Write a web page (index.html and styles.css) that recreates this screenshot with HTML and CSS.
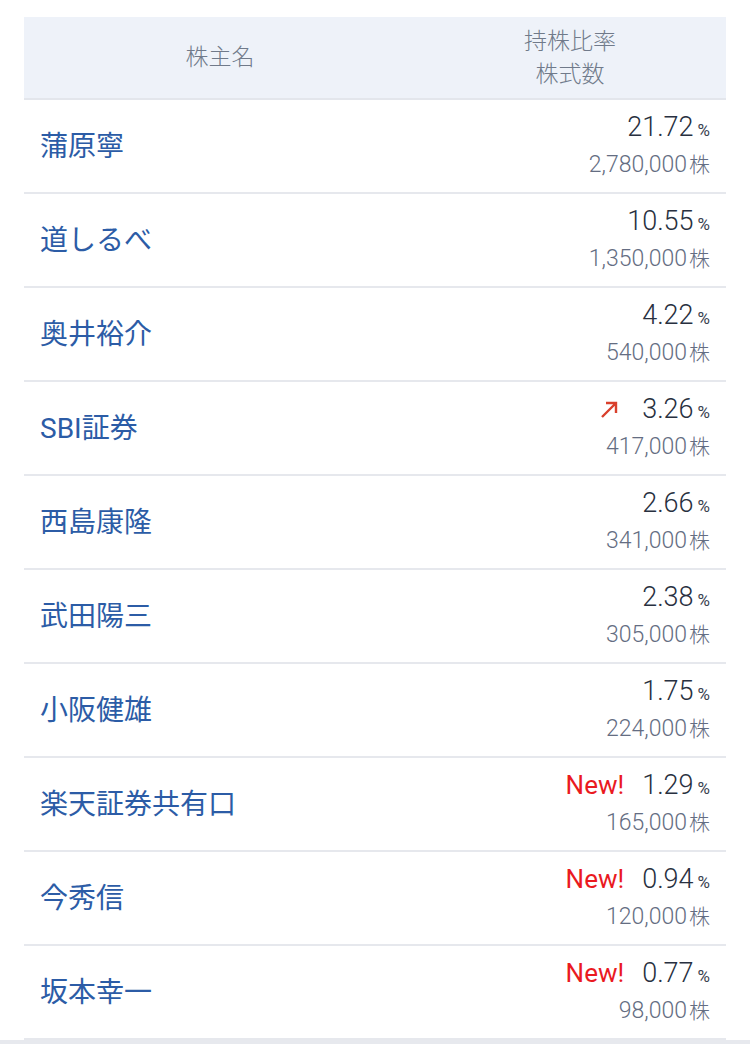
FILE: index.html
```html
<!DOCTYPE html>
<html lang="ja">
<head>
    <meta charset="UTF-8">
    <meta name="viewport" content="width=device-width, initial-scale=1.0">
    <title>大株主</title>
    <link rel="stylesheet" href="styles.css">
</head>
<body>
    <div class="holders">
        <div class="head">
            <div class="head-name">株主名</div>
            <div class="head-ratio">持株比率<br>株式数</div>
        </div>

        <div class="row">
            <div class="name">蒲原寧</div>
            <div class="nums">
                <div class="ratio"><span class="val">21.72</span><span class="pct">%</span></div>
                <div class="shares">2,780,000<span class="unit">株</span></div>
            </div>
        </div>
        <div class="row">
            <div class="name">道しるべ</div>
            <div class="nums">
                <div class="ratio"><span class="val">10.55</span><span class="pct">%</span></div>
                <div class="shares">1,350,000<span class="unit">株</span></div>
            </div>
        </div>
        <div class="row">
            <div class="name">奥井裕介</div>
            <div class="nums">
                <div class="ratio"><span class="val">4.22</span><span class="pct">%</span></div>
                <div class="shares">540,000<span class="unit">株</span></div>
            </div>
        </div>
        <div class="row">
            <div class="name">SBI証券</div>
            <div class="nums">
                <div class="ratio">
                    <svg class="up" width="20" height="20" viewBox="0 0 20 20"><path d="M2 18 L16 4 M6 4 H16 V14" fill="none" stroke="#d9402c" stroke-width="2.4"/></svg>
                    <span class="val">3.26</span><span class="pct">%</span>
                </div>
                <div class="shares">417,000<span class="unit">株</span></div>
            </div>
        </div>
        <div class="row">
            <div class="name">西島康隆</div>
            <div class="nums">
                <div class="ratio"><span class="val">2.66</span><span class="pct">%</span></div>
                <div class="shares">341,000<span class="unit">株</span></div>
            </div>
        </div>
        <div class="row">
            <div class="name">武田陽三</div>
            <div class="nums">
                <div class="ratio"><span class="val">2.38</span><span class="pct">%</span></div>
                <div class="shares">305,000<span class="unit">株</span></div>
            </div>
        </div>
        <div class="row">
            <div class="name">小阪健雄</div>
            <div class="nums">
                <div class="ratio"><span class="val">1.75</span><span class="pct">%</span></div>
                <div class="shares">224,000<span class="unit">株</span></div>
            </div>
        </div>
        <div class="row">
            <div class="name">楽天証券共有口</div>
            <div class="nums">
                <div class="ratio"><span class="new">New!</span><span class="val">1.29</span><span class="pct">%</span></div>
                <div class="shares">165,000<span class="unit">株</span></div>
            </div>
        </div>
        <div class="row">
            <div class="name">今秀信</div>
            <div class="nums">
                <div class="ratio"><span class="new">New!</span><span class="val">0.94</span><span class="pct">%</span></div>
                <div class="shares">120,000<span class="unit">株</span></div>
            </div>
        </div>
        <div class="row">
            <div class="name">坂本幸一</div>
            <div class="nums">
                <div class="ratio"><span class="new">New!</span><span class="val">0.77</span><span class="pct">%</span></div>
                <div class="shares">98,000<span class="unit">株</span></div>
            </div>
        </div>
    </div>
    <div class="footer-bar"></div>
</body>
</html>
```

FILE: styles.css
```css
body {
    margin: 0;
    padding: 0;
    background-color: #ffffff;
    font-family: Roboto, "Noto Sans CJK JP", sans-serif;
}
.holders {
    margin: 17px 24px 0 24px;
}
.head {
    display: flex;
    height: 81px;
    background-color: #eef2f9;
    border-bottom: 2px solid #e3e6ec;
    color: #707a8a;
    font-size: 23px;
    font-weight: 300;
    line-height: 33px;
}
.head-name {
    width: 392px;
    display: flex;
    align-items: center;
    justify-content: center;
}
.head-ratio {
    flex: 1;
    display: flex;
    align-items: center;
    justify-content: center;
    text-align: center;
    padding-right: 2px;
}
.row {
    display: flex;
    align-items: center;
    justify-content: space-between;
    height: 92px;
    border-bottom: 2px solid #e6e8ed;
    padding: 0 16px;
}
.name {
    color: #2c5ca6;
    font-size: 28px;
    padding-bottom: 4px;
}
.nums {
    text-align: right;
}
.ratio {
    display: flex;
    align-items: baseline;
    justify-content: flex-end;
    height: 38px;
    line-height: 38px;
}
.val {
    color: #283040;
    font-size: 27px;
    font-weight: 300;
}
.pct {
    color: #3a4250;
    font-size: 17px;
    margin-left: 4px;
}
.new {
    color: #ea1a1f;
    font-size: 26px;
    margin-right: 18px;
}
.up {
    align-self: center;
    margin-right: 22px;
}
.shares {
    color: #646d82;
    font-size: 23px;
    font-weight: 300;
    line-height: 38px;
}
.unit {
    font-size: 21px;
    margin-left: 2px;
}
.footer-bar {
    height: 6px;
    background-color: #e7e9ee;
}
```
